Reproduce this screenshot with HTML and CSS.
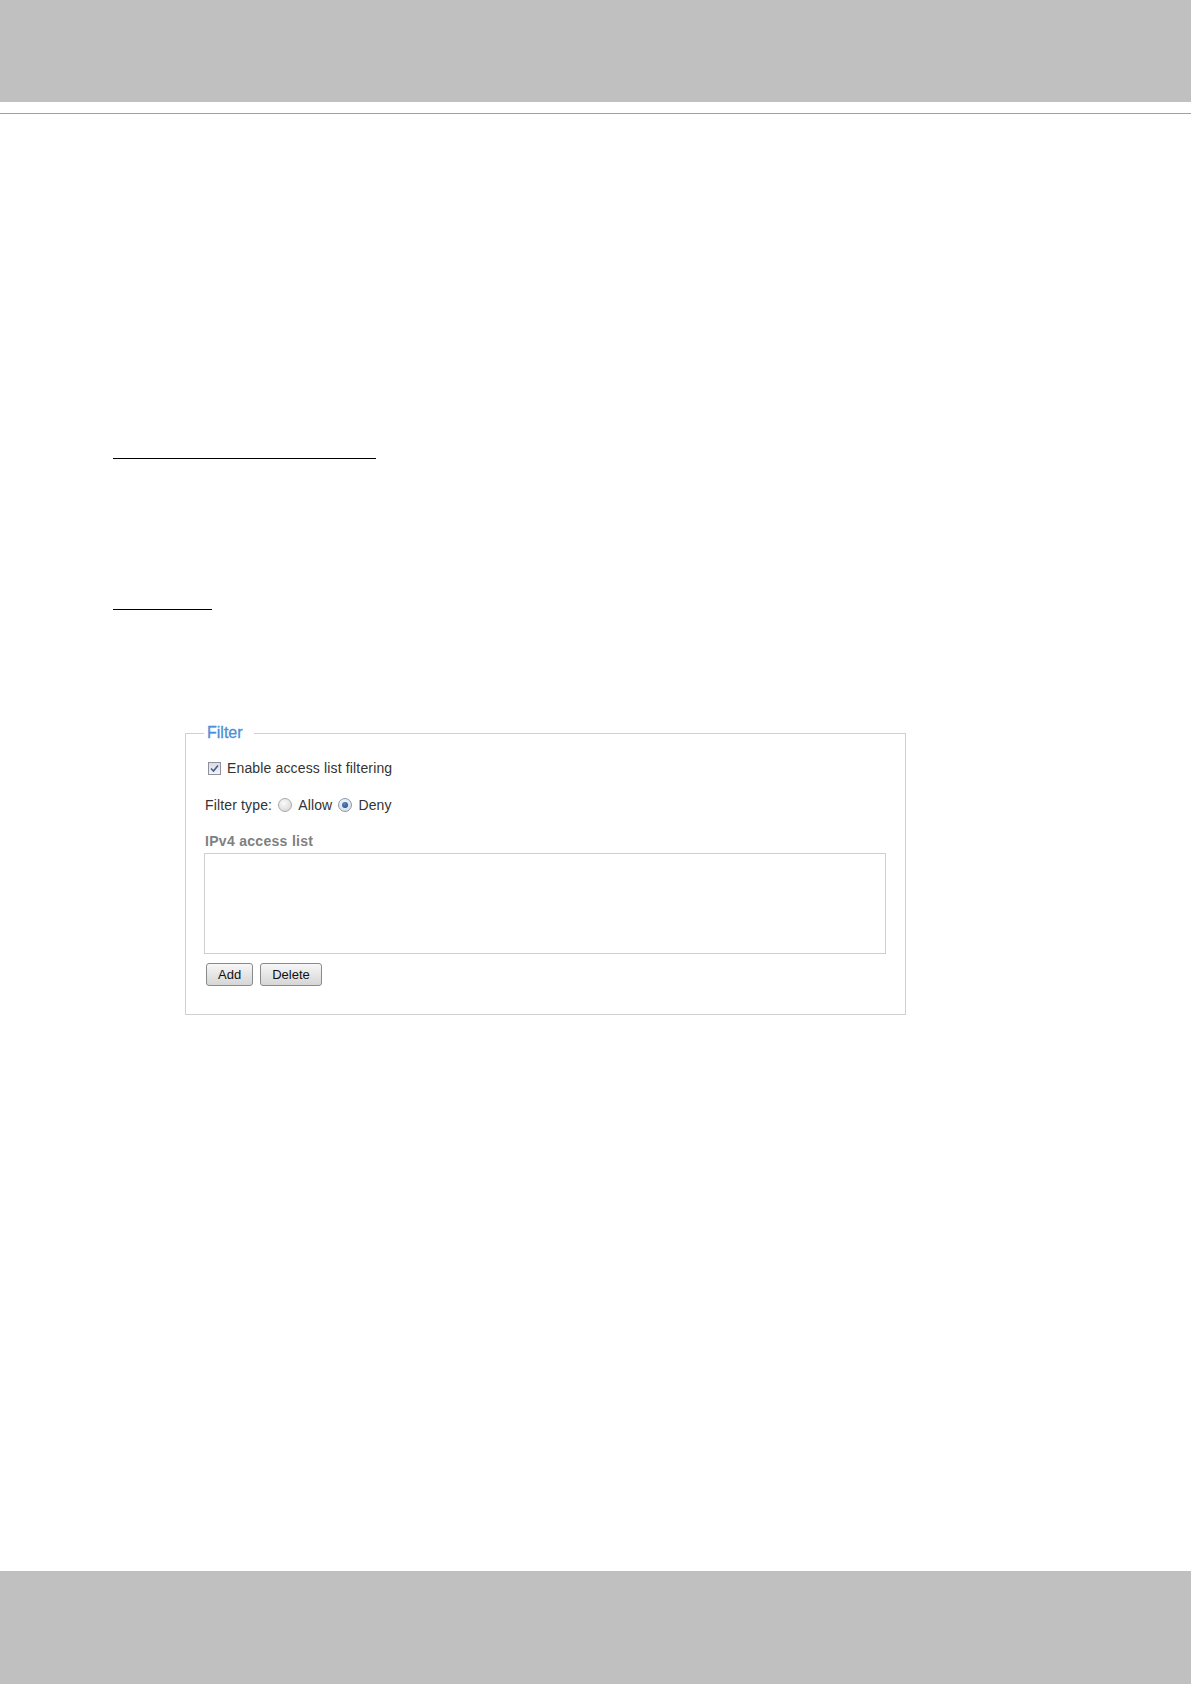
FILE: index.html
```html
<!DOCTYPE html>
<html lang="en">
<head>
    <meta charset="UTF-8">
    <meta name="viewport" content="width=device-width, initial-scale=1.0">
    <title>Access list</title>
    <link rel="stylesheet" href="styles.css">
</head>
<body>
    <header class="topo"></header>
    <div class="regua"></div>

    <main class="conteudo">
        <!-- titulos sublinhados da pagina -->
        <div class="sublinhado longo"></div>
        <div class="sublinhado curto"></div>

        <fieldset class="filtro">
            <legend>Filter</legend>

            <label class="linha-check">
                <span class="caixa marcada">
                    <svg width="9" height="9" viewBox="0 0 9 9"><path d="M1 4.5 L3.5 7 L8 1.5" fill="none" stroke="#3d5f9a" stroke-width="1.6"/></svg>
                </span>
                Enable access list filtering
            </label>

            <div class="linha-tipo">
                Filter type:
                <span class="radio"></span> Allow
                <span class="radio ativo"></span> Deny
            </div>

            <div class="rotulo">IPv4 access list</div>
            <div class="lista"></div>

            <div class="botoes">
                <button type="button">Add</button>
                <button type="button">Delete</button>
            </div>
        </fieldset>
    </main>

    <footer class="rodape"></footer>
</body>
</html>
```

FILE: styles.css
```css
* {
  box-sizing: border-box;
}

body {
  margin: 0;
  min-height: 100vh;
  display: flex;
  flex-direction: column;
  background: #fff;
  font-family: "Liberation Sans", Arial, Helvetica, sans-serif;
  color: #333;
}

.topo {
  height: 102px;
  background: #c0c0c0;
}

.regua {
  margin-top: 11px;
  border-top: 1px solid #a0a0a0;
}

.conteudo {
  flex: 1;
  padding-left: 113px;
}

.sublinhado {
  border-top: 1px solid #000;
}

.sublinhado.longo {
  width: 263px;
  margin-top: 344px;
}

.sublinhado.curto {
  width: 99px;
  margin-top: 150px;
}

.filtro {
  width: 721px;
  margin: 114px 0 0 72px;
  padding: 0 19px 28px 19px;
  border: 1px solid #d0d0d0;
  min-width: 0;
}

.filtro legend {
  margin-left: -1px;
  padding: 0 11px 0 3px;
  font-size: 16px;
  line-height: 18px;
  color: #4a8fd8;
  -webkit-text-stroke: 0.3px #4a8fd8;
}

.linha-check {
  display: flex;
  align-items: center;
  height: 16px;
  margin-top: 18px;
  font-size: 14px;
  letter-spacing: 0.15px;
}

.caixa {
  width: 13px;
  height: 13px;
  margin: 0 6px 0 3px;
  border: 1px solid #8f8f9d;
  background: linear-gradient(#dcdcdc, #f4f4f4);
  display: flex;
  align-items: center;
  justify-content: center;
}

.linha-tipo {
  display: flex;
  align-items: center;
  height: 16px;
  margin-top: 21px;
  font-size: 14px;
  letter-spacing: 0.15px;
}

.radio {
  width: 14px;
  height: 14px;
  margin: 0 6px;
  border-radius: 50%;
  border: 1px solid #a8a8a8;
  background: radial-gradient(circle at 40% 35%, #fafafa, #d2d2d2);
  position: relative;
}

.radio.ativo {
  border-color: #8a9ab0;
  background: radial-gradient(circle at 40% 35%, #f4f8fc, #cfd8e4);
}

.radio.ativo::after {
  content: "";
  position: absolute;
  top: 3px;
  left: 3px;
  width: 6px;
  height: 6px;
  border-radius: 50%;
  background: radial-gradient(circle at 40% 35%, #5a8cc6, #1c3f6e);
}

.rotulo {
  margin-top: 20px;
  height: 16px;
  line-height: 16px;
  font-size: 14px;
  font-weight: bold;
  letter-spacing: 0.3px;
  color: #808080;
}

.lista {
  width: 682px;
  height: 101px;
  margin: 4px 0 0 -1px;
  border: 1px solid #cfcfcf;
  background: #fff;
}

.botoes {
  display: flex;
  gap: 7px;
  margin: 9px 0 0 1px;
}

.botoes button {
  height: 23px;
  padding: 0 11px;
  border: 1px solid #8a8a8a;
  border-radius: 3px;
  background: linear-gradient(#f7f7f7, #e6e6e6 50%, #d6d6d6);
  font-family: "Liberation Sans", Arial, sans-serif;
  font-size: 13px;
  color: #111;
}

.rodape {
  height: 113px;
  background: #c0c0c0;
}
```
